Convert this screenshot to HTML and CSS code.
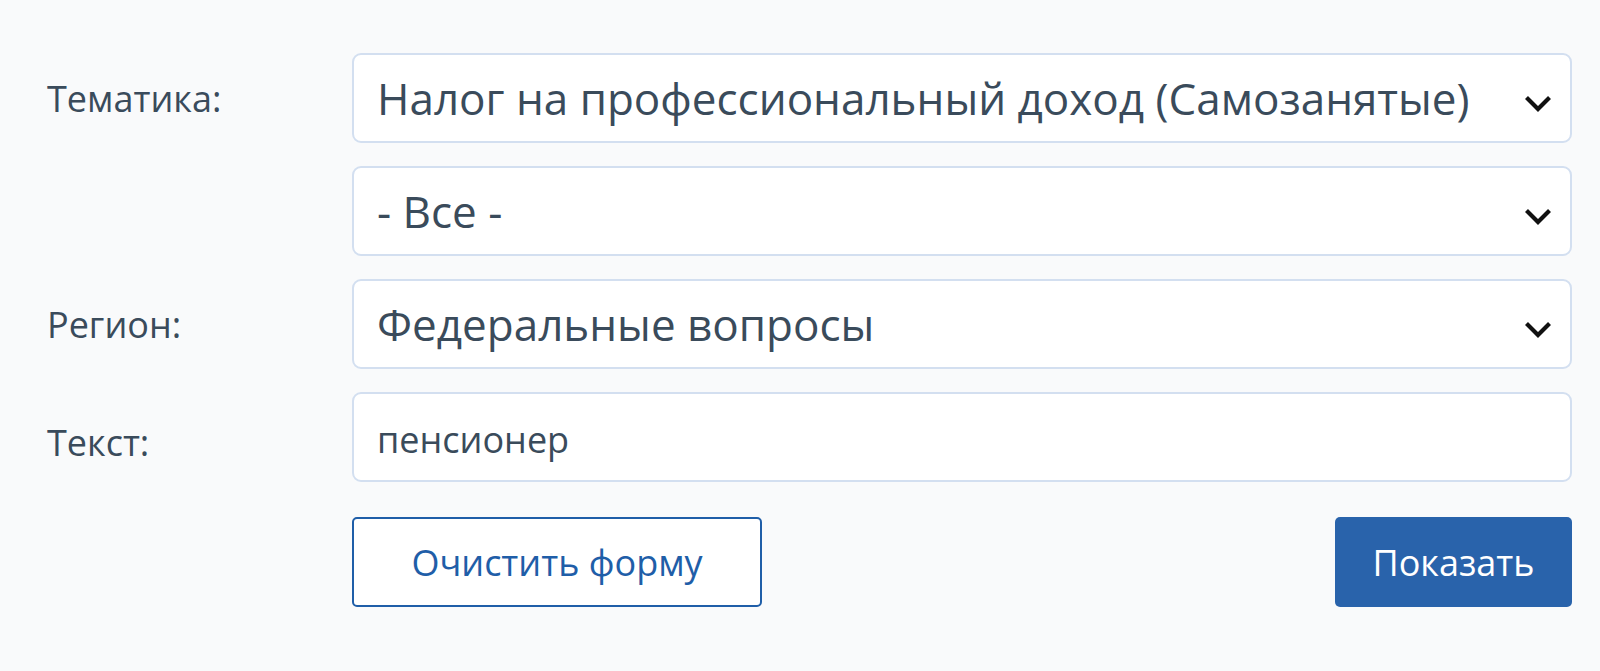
FILE: index.html
```html
<!DOCTYPE html>
<html lang="ru">
<head>
<meta charset="utf-8">
<title>Поиск</title>
<link rel="stylesheet" href="styles.css">
</head>
<body>
<form class="search-form">
  <div class="form-row">
    <label class="form-label">Тематика:</label>
    <div class="select">
      <span class="select-value">Налог на профессиональный доход (Самозанятые)</span>
      <svg class="chevron" viewBox="0 0 28 18" width="28" height="18"><path d="M2.5 2.5 L14 14 L25.5 2.5" fill="none" stroke="#111" stroke-width="4.2"/></svg>
    </div>
  </div>
  <div class="form-row">
    <span class="form-label"></span>
    <div class="select">
      <span class="select-value">- Все -</span>
      <svg class="chevron" viewBox="0 0 28 18" width="28" height="18"><path d="M2.5 2.5 L14 14 L25.5 2.5" fill="none" stroke="#111" stroke-width="4.2"/></svg>
    </div>
  </div>
  <div class="form-row">
    <label class="form-label">Регион:</label>
    <div class="select">
      <span class="select-value">Федеральные вопросы</span>
      <svg class="chevron" viewBox="0 0 28 18" width="28" height="18"><path d="M2.5 2.5 L14 14 L25.5 2.5" fill="none" stroke="#111" stroke-width="4.2"/></svg>
    </div>
  </div>
  <div class="form-row">
    <label class="form-label form-label-low">Текст:</label>
    <div class="text-input">пенсионер</div>
  </div>
  <div class="form-row actions-row">
    <span class="form-label"></span>
    <div class="actions">
      <button type="button" class="btn btn-outline">Очистить форму</button>
      <button type="button" class="btn btn-primary">Показать</button>
    </div>
  </div>
</form>
</body>
</html>
```
FILE: styles.css
```css
html, body {
  margin: 0;
  padding: 0;
  background: #f9fafb;
  font-family: "Open Sans", "Noto Sans", sans-serif;
  color: #3a4b5b;
}

.search-form {
  padding: 53px 28px 0 47px;
  display: flex;
  flex-direction: column;
  gap: 23px;
}

.form-row {
  display: grid;
  grid-template-columns: 305px 1220px;
  align-items: center;
}

.form-label {
  font-size: 36px;
  color: #3a4b5b;
}

.form-label-low {
  margin-top: 11px;
}

.select,
.text-input {
  box-sizing: border-box;
  height: 90px;
  background: #fff;
  border: 2px solid #d3dff0;
  border-radius: 9px;
  display: flex;
  align-items: center;
  padding: 0 18px 0 23px;
}

.select-value {
  flex: 1;
  font-size: 44px;
  color: #3a4b5b;
  white-space: nowrap;
}

.chevron {
  flex: none;
  margin-top: 12px;
}

.text-input {
  font-size: 36px;
  color: #3a4b5b;
  padding-top: 4px;
}

.actions-row {
  margin-top: 12px;
}

.actions {
  display: flex;
  justify-content: space-between;
}

.btn {
  box-sizing: border-box;
  height: 90px;
  font-family: "Open Sans", "Noto Sans", sans-serif;
  font-size: 36px;
  border-radius: 5px;
  cursor: pointer;
  padding: 0;
}

.btn-outline {
  width: 410px;
  background: #fff;
  border: 2px solid #1f5ea8;
  color: #1f5ea8;
}

.btn-primary {
  width: 237px;
  background: #2963ab;
  border: none;
  color: #fff;
}
```
